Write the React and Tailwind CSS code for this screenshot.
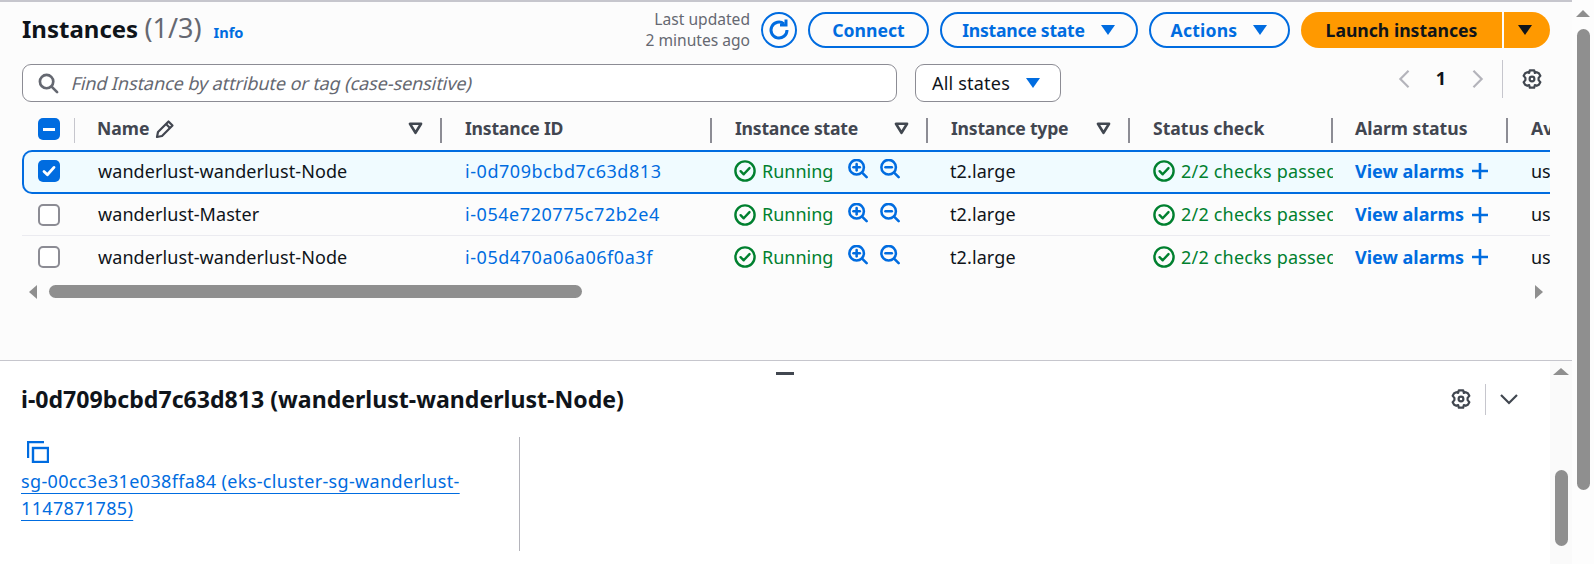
const rows = [
  { name: "wanderlust-wanderlust-Node", id: "i-0d709bcbd7c63d813", selected: true },
  { name: "wanderlust-Master", id: "i-054e720775c72b2e4" },
  { name: "wanderlust-wanderlust-Node", id: "i-05d470a06a06f0a3f" },
];

function Caret({ className }) {
  return (
    <svg viewBox="0 0 16 12" className={className} fill="currentColor">
      <path d="M1 1h14L8 11z" />
    </svg>
  );
}

function SortIcon() {
  return (
    <svg viewBox="0 0 14 12" className="w-[15px] h-[13px] text-[#414750]" fill="none" stroke="currentColor" strokeWidth="2.4">
      <path d="M1.8 1.6h10.4L7 10z" strokeLinejoin="round" />
    </svg>
  );
}

function Gear() {
  return (
    <svg viewBox="0 0 24 24" className="w-[22px] h-[22px] text-[#414750]" fill="none" stroke="currentColor" strokeWidth="2.4" strokeLinejoin="round">
      <path d="M9.6 2.5h4.8l.7 2.9 2-.8 2.4 1.2 1.6 2.8-1.9 2.2v2.4l1.9 2.2-1.6 2.8-2.4 1.2-2-.8-.7 2.9H9.6l-.7-2.9-2 .8-2.4-1.2-1.6-2.8 1.9-2.2v-2.4L2.9 8.6l1.6-2.8 2.4-1.2 2 .8z" />
      <circle cx="12" cy="12" r="2.6" />
    </svg>
  );
}

function CheckCircle() {
  return (
    <svg viewBox="0 0 22 22" className="w-[22px] h-[22px] shrink-0 text-[#00802f]" fill="none" stroke="currentColor" strokeWidth="2.4">
      <circle cx="11" cy="11" r="9.6" />
      <path d="M6.6 11.2l3.1 3.1 5.8-6.2" strokeLinecap="round" strokeLinejoin="round" />
    </svg>
  );
}

function Zoom({ minus }) {
  return (
    <svg viewBox="0 0 22 22" className="w-[20px] h-[20px] text-[#006ce0]" fill="none" stroke="currentColor" strokeWidth="2.8" strokeLinecap="round">
      <circle cx="9.5" cy="9" r="8" />
      <path d="M15.5 15l5 5" />
      <path d="M6 9h7" />
      {!minus && <path d="M9.5 5.5v7" />}
    </svg>
  );
}

function HeadCell({ label, pl, sort, sep = true, icon, tight }) {
  return (
    <div className="relative flex items-center h-[25px]">
      <span className={`${pl} ${tight ? "tracking-[-0.22px]" : ""} flex items-center gap-[5px] -mt-[4px] font-bold text-[17.6px] leading-[21px] text-[#424650] whitespace-nowrap`}>
        {label}
        {icon}
      </span>
      {sort && <span className="absolute right-[19px] top-[4px] flex"><SortIcon /></span>}
      {sep && <span className="absolute right-0 top-0 h-[25px] w-[2px] bg-[#8c8c94]" />}
    </div>
  );
}

function Row({ row }) {
  const box = row.selected
    ? "grid-cols-[52px_366px_270px_216px_202px_203px_175px_200px] bg-[#f0fbff] border-y-2 border-l-2 border-[#006ce0] rounded-l-[10px] h-[44px] pb-[2px]"
    : "grid-cols-[54px_366px_270px_216px_202px_203px_175px_200px] h-[42px] border-b border-[#ebebf0] last:border-b-0";
  return (
    <div className={`grid w-[1686px] ${box} items-center text-[#0f141a] text-[18px] whitespace-nowrap`}>
      <div className={row.selected ? "pl-[14px]" : "pl-[16px]"}>
        {row.selected ? (
          <div className="w-[22px] h-[22px] rounded-[5px] bg-[#006ce0] flex items-center justify-center">
            <svg viewBox="0 0 14 14" className="w-[14px] h-[14px]" fill="none" stroke="white" strokeWidth="2.8" strokeLinecap="round" strokeLinejoin="round">
              <path d="M2 7.5l3.4 3.3L12 3.4" />
            </svg>
          </div>
        ) : (
          <div className="w-[22px] h-[22px] rounded-[5px] border-2 border-[#8c8c94] bg-white" />
        )}
      </div>
      <div className="pl-[22px] tracking-[0.08px]">{row.name}</div>
      <div className="pl-[23px] text-[#006ce0] tracking-[0.55px]">{row.id}</div>
      <div className="pl-[22px] flex items-center gap-[6px] text-[#00802f]">
        <CheckCircle />
        <span>Running</span>
        <span className="flex gap-[12px] ml-[9px] -mt-[4px]">
          <Zoom />
          <Zoom minus />
        </span>
      </div>
      <div className="pl-[22px] tracking-[0.1px]">t2.large</div>
      <div className="pl-[23px] flex items-center gap-[6px] text-[#00802f] overflow-hidden tracking-[0.2px]">
        <CheckCircle />
        <span>2/2 checks passed</span>
      </div>
      <div className="pl-[22px] flex items-center gap-[7px] text-[#006ce0] font-bold text-[18px]">
        View alarms
        <svg viewBox="0 0 18 18" className="w-[18px] h-[18px]" fill="none" stroke="currentColor" strokeWidth="2.6">
          <path d="M9 1v16M1 9h16" />
        </svg>
      </div>
      <div className="pl-[23px]">us-east-1</div>
    </div>
  );
}

function PillButton({ label, className, caret }) {
  return (
    <button className={`h-[36px] rounded-full border-2 border-[#006ce0] text-[#006ce0] font-bold text-[17.6px] flex items-center justify-center gap-[15px] ${className}`}>
      {label}
      {caret && <Caret className="w-[16px] h-[12px]" />}
    </button>
  );
}

export default function App() {
  return (
    <div className="w-[1594px] h-[564px] flex overflow-hidden bg-[#fdfdfd] font-['Noto_Sans',sans-serif] text-[18px]">
      <div className="w-[1572px] flex flex-col">
        <section className="h-[361px] shrink-0 border-t-2 border-b border-[#c6c6cd] bg-[#fcfcfc] pl-[22px] pr-[22px] relative">
          {/* title row */}
          <div className="flex items-center h-[36px] mt-[10px] w-[1528px]">
            <h1 className="text-[24px] font-bold text-[#0f141a] leading-[36px] -mt-[3px] whitespace-nowrap">
              Instances <span className="font-normal text-[27px] text-[#656871]">(1/3)</span>
            </h1>
            <a className="ml-[12px] mt-[6px] text-[14.6px] font-bold text-[#006ce0]">Info</a>
            <div className="ml-auto mr-[11px] text-right text-[15.6px] leading-[21px] text-[#656871]">
              <div>Last updated</div>
              <div>2 minutes ago</div>
            </div>
            <button className="w-[36px] h-[36px] mr-[11px] rounded-full border-2 border-[#006ce0] flex items-center justify-center text-[#006ce0]">
              <svg viewBox="0 0 24 24" className="w-[24px] h-[24px]" fill="none" stroke="currentColor" strokeWidth="3">
                <path d="M20 12a8 8 0 1 1-3-6.2" />
                <path d="M19 1.5V7h-6" strokeLinejoin="miter" />
              </svg>
            </button>
            <PillButton label="Connect" className="w-[121px] mr-[11px]" />
            <PillButton label="Instance state" caret className="w-[198px] mr-[11px] tracking-[-0.25px]" />
            <PillButton label="Actions" caret className="w-[141px] mr-[11px] tracking-[0.2px]" />
            <div className="flex h-[36px] w-[249px] text-[#0f141a] font-bold text-[17.6px]">
              <button className="w-[201px] bg-[#ff9900] rounded-l-full">Launch instances</button>
              <button className="flex-1 ml-[2px] bg-[#ff9900] rounded-r-full flex items-center justify-center pr-[5px]">
                <Caret className="w-[16px] h-[12px]" />
              </button>
            </div>
          </div>

          {/* filter row */}
          <div className="flex items-center h-[38px] mt-[16px] w-[1528px]">
            <div className="w-[875px] h-[38px] rounded-[9px] border border-[#8c8c94] bg-white flex items-center pl-[15px] gap-[13px]">
              <svg viewBox="0 0 22 22" className="w-[21px] h-[21px] text-[#656871]" fill="none" stroke="currentColor" strokeWidth="2.8" strokeLinecap="round">
                <circle cx="9" cy="9" r="7" />
                <path d="M14.5 14.5l5.5 5.5" />
              </svg>
              <span className="inline-block -skew-x-[14deg] text-[#656871] whitespace-nowrap tracking-[-0.08px]">Find Instance by attribute or tag (case-sensitive)</span>
            </div>
            <div className="ml-[18px] w-[146px] h-[38px] rounded-[9px] border border-[#8c8c94] bg-white flex items-center pl-[16px] gap-[15px] text-[#0f141a] tracking-[0.2px]">
              All states
              <Caret className="w-[16px] h-[12px] text-[#006ce0]" />
            </div>
            <div className="ml-auto flex items-center -mt-[9px]">
              <svg viewBox="0 0 14 22" className="w-[14px] h-[20px] text-[#b4b4bb]" fill="none" stroke="currentColor" strokeWidth="2.4">
                <path d="M12 2L3 11l9 9" />
              </svg>
              <span className="font-bold text-[#0f141a] mx-[25px]">1</span>
              <svg viewBox="0 0 14 22" className="w-[14px] h-[20px] text-[#b4b4bb]" fill="none" stroke="currentColor" strokeWidth="2.4">
                <path d="M2 2l9 9-9 9" />
              </svg>
              <span className="w-px h-[38px] bg-[#c6c6cd] ml-[17px] mr-[18px]" />
              <span className="mr-[7px] flex"><Gear /></span>
            </div>
          </div>

          {/* table */}
          <div className="w-[1528px] overflow-hidden mt-[16px]">
            <div className="grid grid-cols-[54px_366px_270px_216px_202px_203px_175px_200px] w-[1686px] h-[32px]">
              <div className="relative h-[25px] pl-[16px]">
                <div className="w-[22px] h-[22px] rounded-[5px] bg-[#006ce0] flex items-center justify-center">
                  <span className="w-[12px] h-[3px] bg-white" />
                </div>
                <span className="absolute right-[1px] top-0 h-[25px] w-px bg-[#c6c6cd]" />
              </div>
              <HeadCell
                label="Name"
                pl="pl-[21px]"
                sort
                icon={
                  <svg viewBox="0 0 20 20" className="w-[20px] h-[20px]" fill="none" stroke="currentColor" strokeWidth="2.2" strokeLinejoin="round">
                    <path d="M2 18l1-5L13.5 2.5l4 4L7 17z" />
                    <path d="M11 5l4 4" />
                  </svg>
                }
              />
              <HeadCell label="Instance ID" pl="pl-[23px]" tight />
              <HeadCell label="Instance state" pl="pl-[23px]" sort tight />
              <HeadCell label="Instance type" pl="pl-[23px]" sort tight />
              <HeadCell label="Status check" pl="pl-[23px]" />
              <HeadCell label="Alarm status" pl="pl-[22px]" />
              <HeadCell label="Availability Zone" pl="pl-[23px]" sep={false} />
            </div>
            {rows.map((row) => (
              <Row key={row.id} row={row} />
            ))}
          </div>

          {/* horizontal scrollbar */}
          <div className="flex items-center h-[13px] mt-[7px] w-[1528px]">
            <span className="ml-[7px] w-0 h-0 border-y-[7px] border-y-transparent border-r-[8px] border-r-[#8f8f8f]" />
            <span className="ml-[12px] w-[533px] h-[13px] rounded-full bg-[#8f8f8f]" />
            <span className="ml-auto mr-[7px] w-0 h-0 border-y-[7px] border-y-transparent border-l-[8px] border-l-[#8f8f8f]" />
          </div>

          <span className="absolute left-[776px] bottom-[-15px] w-[18px] h-[3px] bg-[#414750] z-10" />
        </section>

        <section className="flex-1 flex bg-white min-h-0">
          <div className="w-[1550px] pl-[21px] pr-[22px] relative">
            <div className="flex items-center h-[30px] mt-[23px]">
              <h2 className="text-[23.1px] font-bold text-[#0f141a] leading-[30px] whitespace-nowrap -mt-[1px]">
                i-0d709bcbd7c63d813 (wanderlust-wanderlust-Node)
              </h2>
              <div className="ml-auto flex items-center">
                <Gear />
                <span className="w-px h-[31px] bg-[#c6c6cd] ml-[13px] mr-[14px]" />
                <svg viewBox="0 0 18 12" className="w-[18px] h-[12px] text-[#414750] mr-[10px]" fill="none" stroke="currentColor" strokeWidth="2.2">
                  <path d="M1 2l8 8 8-8" />
                </svg>
              </div>
            </div>
            <div className="flex mt-[23px]">
              <div className="w-[499px] h-[114px] border-r border-[#b4b4bb] pt-[4px] pr-[20px]">
                <svg viewBox="0 0 22 22" className="w-[22px] h-[22px] ml-[6px] text-[#006ce0]" fill="none" stroke="currentColor" strokeWidth="2.4">
                  <path d="M1 17V1h16" />
                  <rect x="6" y="7" width="15" height="14" />
                </svg>
                <a className="block mt-[5px] text-[18px] leading-[27px] text-[#006ce0] underline underline-offset-[5px] decoration-1 tracking-[0.35px]">
                  sg-00cc3e31e038ffa84 (eks-cluster-sg-wanderlust-1147871785)
                </a>
              </div>
            </div>
          </div>
          <div className="w-[22px] bg-[#fafafa] flex flex-col items-center">
            <span className="mt-[7px] w-0 h-0 border-x-[8px] border-x-transparent border-b-[7px] border-b-[#8f8f8f]" />
            <span className="mt-[95px] w-[13px] h-[76px] rounded-full bg-[#8f8f8f]" />
          </div>
        </section>
      </div>

      <div className="flex-1 bg-[#fdfdfd] flex flex-col items-center">
        <span className="mt-[10px] w-0 h-0 border-x-[7px] border-x-transparent border-b-[7px] border-b-[#8f8f8f]" />
        <span className="mt-[12px] w-[13px] h-[461px] rounded-full bg-[#8f8f8f]" />
      </div>
    </div>
  );
}
